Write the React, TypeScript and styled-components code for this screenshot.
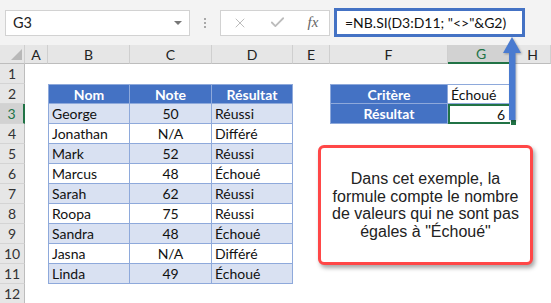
import React from 'react';
import styled, { createGlobalStyle, css } from 'styled-components';
import { X, Check } from 'lucide-react';

const GlobalStyle = createGlobalStyle`
  html, body { margin: 0; padding: 0; background: #fff; }
  body { font-family: Lato, "Liberation Sans", sans-serif; }
`;

const GREEN = '#217346';
const BLUE = '#4472c4';
const LINE = '#8ea9db';

const Page = styled.div`
  position: relative;
  width: 551px;
  height: 303px;
  overflow: hidden;
  background: #fff;
`;

const Toolbar = styled.div`
  height: 45px;
  background: #f3f3f3;
  display: flex;
  align-items: center;
  padding-left: 5px;
  box-sizing: border-box;
`;

const NameBox = styled.div`
  width: 185px;
  height: 26px;
  box-sizing: border-box;
  background: #fff;
  border: 1px solid #d2d2d2;
  display: flex;
  align-items: center;
  justify-content: space-between;
  padding: 0 7px 0 7px;
  font-size: 14.5px;
  color: #222;
`;

const DropArrow = styled.span`
  width: 0;
  height: 0;
  border-left: 4px solid transparent;
  border-right: 4px solid transparent;
  border-top: 4px solid #777;
`;

const Dots = styled.div`
  width: 30px;
  display: flex;
  flex-direction: column;
  align-items: center;
  gap: 2px;
  span {
    width: 2px;
    height: 2px;
    background: #a8a8a8;
  }
`;

const FuncBox = styled.div`
  width: 110px;
  height: 26px;
  box-sizing: border-box;
  background: #fff;
  border: 1px solid #d2d2d2;
  display: flex;
  align-items: center;
  justify-content: space-around;
  color: #bcbcbc;
`;

const Fx = styled.span`
  font-family: "Liberation Serif", serif;
  font-style: italic;
  font-size: 15px;
  color: #666;
`;

const FormulaBar = styled.div`
  margin-left: 4px;
  width: 191px;
  height: 29px;
  box-sizing: border-box;
  background: #fff;
  border: 3px solid ${BLUE};
  display: flex;
  align-items: center;
  padding-left: 8px;
  font-size: 14px;
  color: #111;
  white-space: nowrap;
`;

const Sheet = styled.div`
  display: grid;
  grid-template-columns: 25px 23px 82px 82px 81px 37px 118px 67px 36px;
  grid-template-rows: 19px repeat(12, 20px);
`;

const ColHead = styled.div<{ $active?: boolean }>`
  background: ${p => (p.$active ? '#d2d2d2' : '#e6e6e6')};
  border-right: 1px solid #cfcfcf;
  border-bottom: ${p => (p.$active ? `2px solid ${GREEN}` : '1px solid #bdbdbd')};
  box-sizing: border-box;
  display: flex;
  align-items: center;
  justify-content: center;
  font-size: 14px;
  color: ${p => (p.$active ? GREEN : '#222')};
`;

const Corner = styled.div`
  position: relative;
  background: #e6e6e6;
  border-right: 1px solid #cfcfcf;
  border-bottom: 1px solid #bdbdbd;
  box-sizing: border-box;
  &::after {
    content: '';
    position: absolute;
    right: 2px;
    bottom: 3px;
    border-left: 11px solid transparent;
    border-bottom: 11px solid #b8b8b8;
  }
`;

const RowHead = styled.div<{ $active?: boolean }>`
  background: ${p => (p.$active ? '#d2d2d2' : '#e6e6e6')};
  border-right: ${p => (p.$active ? `2px solid ${GREEN}` : '1px solid #bdbdbd')};
  border-bottom: 1px solid #d4d4d4;
  box-sizing: border-box;
  display: flex;
  align-items: center;
  justify-content: center;
  font-size: 14px;
  color: ${p => (p.$active ? GREEN : '#333')};
`;

type Kind = 'blank' | 'head' | 'band' | 'plain' | 'selected';

const Cell = styled.div<{ $kind: Kind; $align?: string; $left?: boolean; $top?: boolean }>`
  position: relative;
  box-sizing: border-box;
  display: flex;
  align-items: center;
  padding: 0 3px;
  font-size: 14px;
  color: #111;
  white-space: nowrap;
  justify-content: ${p =>
    p.$align === 'center' ? 'center' : p.$align === 'right' ? 'flex-end' : 'flex-start'};
  ${p =>
    p.$kind !== 'blank' &&
    p.$kind !== 'selected' &&
    css`
      border-right: 1px solid ${LINE};
      border-bottom: 1px solid ${LINE};
      ${p.$left && `border-left: 1px solid ${LINE};`}
      ${p.$top && `border-top: 1px solid ${LINE};`}
    `}
  ${p =>
    p.$kind === 'head' &&
    css`
      background: ${BLUE};
      color: #fff;
      font-weight: 700;
    `}
  ${p => p.$kind === 'band' && css`background: #d9e1f2;`}
  ${p => p.$kind === 'plain' && css`background: #fff;`}
  ${p =>
    p.$kind === 'selected' &&
    css`
      background: #fff;
      border: 2px solid ${GREEN};
      padding-right: 8px;
      &::after {
        content: '';
        position: absolute;
        right: -4px;
        bottom: -4px;
        width: 5px;
        height: 5px;
        background: ${GREEN};
        border: 1px solid #fff;
      }
    `}
`;

const ArrowSvg = styled.svg`
  position: absolute;
  left: 502px;
  top: 36px;
  filter: drop-shadow(1px 1px 1px rgba(0, 0, 0, 0.3));
`;

const Callout = styled.div`
  position: absolute;
  left: 318px;
  top: 145px;
  width: 215px;
  height: 120px;
  box-sizing: border-box;
  background: #fff;
  border: 3px solid #ff4747;
  border-radius: 6px;
  box-shadow: 2px 3px 4px rgba(0, 0, 0, 0.35);
  display: flex;
  align-items: center;
  justify-content: center;
  text-align: center;
  font-family: "Liberation Sans", Arial, sans-serif;
  font-size: 16px;
  line-height: 17.5px;
  color: #222;
`;

const cols = ['A', 'B', 'C', 'D', 'E', 'F', 'G', 'H'];

const data: [string, string, string][] = [
  ['George', '50', 'Réussi'],
  ['Jonathan', 'N/A', 'Différé'],
  ['Mark', '52', 'Réussi'],
  ['Marcus', '48', 'Échoué'],
  ['Sarah', '62', 'Réussi'],
  ['Roopa', '75', 'Réussi'],
  ['Sandra', '48', 'Échoué'],
  ['Jasna', 'N/A', 'Différé'],
  ['Linda', '49', 'Échoué'],
];

function rowCells(r: number) {
  const out: React.ReactNode[] = [];
  const k = (c: number) => `${r}-${c}`;
  // A
  out.push(<Cell key={k(0)} $kind="blank" />);
  if (r === 2) {
    out.push(<Cell key={k(1)} $kind="head" $align="center" $left $top>Nom</Cell>);
    out.push(<Cell key={k(2)} $kind="head" $align="center" $top>Note</Cell>);
    out.push(<Cell key={k(3)} $kind="head" $align="center" $top>Résultat</Cell>);
  } else if (r >= 3 && r <= 11) {
    const [n, note, res] = data[r - 3];
    const kind: Kind = r % 2 === 1 ? 'band' : 'plain';
    out.push(<Cell key={k(1)} $kind={kind} $left>{n}</Cell>);
    out.push(<Cell key={k(2)} $kind={kind} $align="center">{note}</Cell>);
    out.push(<Cell key={k(3)} $kind={kind}>{res}</Cell>);
  } else {
    out.push(<Cell key={k(1)} $kind="blank" />, <Cell key={k(2)} $kind="blank" />, <Cell key={k(3)} $kind="blank" />);
  }
  // E
  out.push(<Cell key={k(4)} $kind="blank" />);
  if (r === 2) {
    out.push(<Cell key={k(5)} $kind="head" $align="center" $left $top>Critère</Cell>);
    out.push(<Cell key={k(6)} $kind="plain" $top>Échoué</Cell>);
  } else if (r === 3) {
    out.push(<Cell key={k(5)} $kind="head" $align="center" $left>Résultat</Cell>);
    out.push(<Cell key={k(6)} $kind="selected" $align="right">6</Cell>);
  } else {
    out.push(<Cell key={k(5)} $kind="blank" />, <Cell key={k(6)} $kind="blank" />);
  }
  out.push(<Cell key={k(7)} $kind="blank" />);
  return out;
}

export default function App() {
  return (
    <Page>
      <GlobalStyle />
      <Toolbar>
        <NameBox>
          G3
          <DropArrow />
        </NameBox>
        <Dots>
          <span />
          <span />
          <span />
        </Dots>
        <FuncBox>
          <X size={16} strokeWidth={1.5} />
          <Check size={17} strokeWidth={2.5} />
          <Fx>fx</Fx>
        </FuncBox>
        <FormulaBar>=NB.SI(D3:D11; "&lt;&gt;"&amp;G2)</FormulaBar>
      </Toolbar>
      <Sheet>
        <Corner />
        {cols.map(c => (
          <ColHead key={c} $active={c === 'G'}>
            {c}
          </ColHead>
        ))}
        {Array.from({ length: 12 }, (_, i) => i + 1).map(r => (
          <React.Fragment key={r}>
            <RowHead $active={r === 3}>{r}</RowHead>
            {rowCells(r)}
          </React.Fragment>
        ))}
      </Sheet>
      <ArrowSvg width="22" height="86" viewBox="0 0 22 86">
        <polygon points="10,1 19,17 13.5,17 13.5,84 7,84 7,17 1,17" fill="#4a7bd0" />
      </ArrowSvg>
      <Callout>
        <div>
          Dans cet exemple, la
          <br />
          formule compte le nombre
          <br />
          de valeurs qui ne sont pas
          <br />
          égales à "Échoué"
        </div>
      </Callout>
    </Page>
  );
}
